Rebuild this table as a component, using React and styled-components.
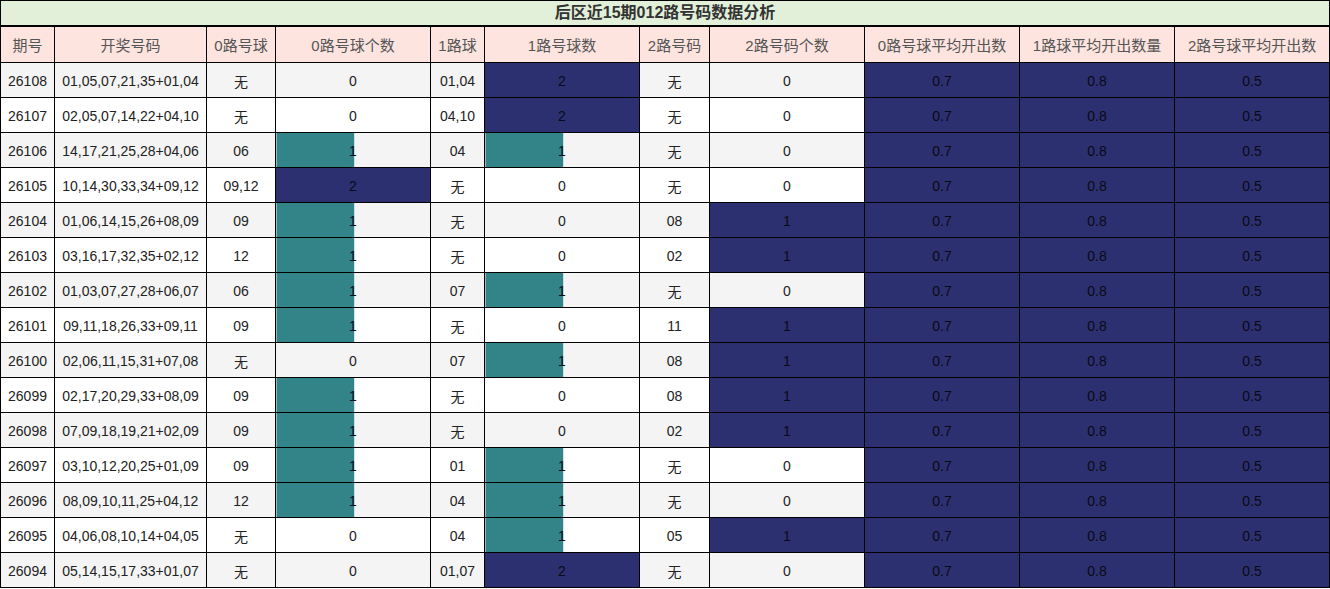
import React from "react";
import styled, { createGlobalStyle } from "styled-components";

const GlobalStyle = createGlobalStyle`
  body {
    margin: 0;
    background: #ffffff;
    font-family: "Liberation Sans", "Noto Sans CJK SC", sans-serif;
  }
`;

const Table = styled.table`
  border-collapse: collapse;
  table-layout: fixed;
  width: 1330px;
  font-size: 14px;
  color: #222222;
`;

const TitleCell = styled.th`
  height: 24px;
  padding: 0;
  background: #e2efd9;
  border: 1px solid #000;
  border-bottom: 2px solid #000;
  font-size: 16px;
  font-weight: bold;
  color: #333333;
  text-align: center;
  line-height: 24px;
`;

const HeadCell = styled.th`
  height: 35px;
  padding: 0;
  background: #fde4df;
  border: 1px solid #000;
  font-size: 15px;
  font-weight: normal;
  color: #555555;
  text-align: center;
  white-space: nowrap;
`;

const Row = styled.tr`
  background: ${(p) => (p.$odd ? "#f4f4f4" : "#ffffff")};
`;

const Cell = styled.td`
  height: 33px;
  padding: 1px 0 0;
  border: 1px solid #000;
  text-align: center;
  white-space: nowrap;
`;

const BarCell = styled(Cell)`
  color: ${(p) => (p.$full || p.$part ? "#0a0a14" : "#222222")};
  background-color: ${(p) => (p.$full ? "#2d3070" : "transparent")};
  background-image: ${(p) =>
    p.$part
      ? "linear-gradient(to right, #8fbcbe 0 1px, #338489 1px calc(100% - 1px), #a9cfd1 calc(100% - 1px))"
      : "none"};
  background-repeat: no-repeat;
  background-size: ${(p) => p.$part || 0}% 100%;
`;

const cols = [54, 152, 69, 155, 54, 155, 70, 155, 155, 155, 155];

const headers = [
  "期号",
  "开奖号码",
  "0路号球",
  "0路号球个数",
  "1路球",
  "1路号球数",
  "2路号码",
  "2路号码个数",
  "0路号球平均开出数",
  "1路球平均开出数量",
  "2路号球平均开出数",
];

const rows = [
  ["26108", "01,05,07,21,35+01,04", "无", 0, "01,04", 2, "无", 0],
  ["26107", "02,05,07,14,22+04,10", "无", 0, "04,10", 2, "无", 0],
  ["26106", "14,17,21,25,28+04,06", "06", 1, "04", 1, "无", 0],
  ["26105", "10,14,30,33,34+09,12", "09,12", 2, "无", 0, "无", 0],
  ["26104", "01,06,14,15,26+08,09", "09", 1, "无", 0, "08", 1],
  ["26103", "03,16,17,32,35+02,12", "12", 1, "无", 0, "02", 1],
  ["26102", "01,03,07,27,28+06,07", "06", 1, "07", 1, "无", 0],
  ["26101", "09,11,18,26,33+09,11", "09", 1, "无", 0, "11", 1],
  ["26100", "02,06,11,15,31+07,08", "无", 0, "07", 1, "08", 1],
  ["26099", "02,17,20,29,33+08,09", "09", 1, "无", 0, "08", 1],
  ["26098", "07,09,18,19,21+02,09", "09", 1, "无", 0, "02", 1],
  ["26097", "03,10,12,20,25+01,09", "09", 1, "01", 1, "无", 0],
  ["26096", "08,09,10,11,25+04,12", "12", 1, "04", 1, "无", 0],
  ["26095", "04,06,08,10,14+04,05", "无", 0, "04", 1, "05", 1],
  ["26094", "05,14,15,17,33+01,07", "无", 0, "01,07", 2, "无", 0],
];

const maxOf = (i) => Math.max(...rows.map((r) => r[i]));
const maxes = { 3: maxOf(3), 5: maxOf(5), 7: maxOf(7) };

function Bar({ value, max }) {
  if (value === 0) return <BarCell>{value}</BarCell>;
  if (value >= max) return <BarCell $full>{value}</BarCell>;
  return <BarCell $part={(value / max) * 100 + 1}>{value}</BarCell>;
}

export default function App() {
  return (
    <>
      <GlobalStyle />
      <Table>
        <colgroup>
          {cols.map((w, i) => (
            <col key={i} style={{ width: w }} />
          ))}
        </colgroup>
        <thead>
          <tr>
            <TitleCell colSpan={11}>后区近15期012路号码数据分析</TitleCell>
          </tr>
          <tr>
            {headers.map((h) => (
              <HeadCell key={h}>{h}</HeadCell>
            ))}
          </tr>
        </thead>
        <tbody>
          {rows.map((r, i) => (
            <Row key={r[0]} $odd={i % 2 === 0}>
              <Cell>{r[0]}</Cell>
              <Cell>{r[1]}</Cell>
              <Cell>{r[2]}</Cell>
              <Bar value={r[3]} max={maxes[3]} />
              <Cell>{r[4]}</Cell>
              <Bar value={r[5]} max={maxes[5]} />
              <Cell>{r[6]}</Cell>
              <Bar value={r[7]} max={maxes[7]} />
              <BarCell $full>0.7</BarCell>
              <BarCell $full>0.8</BarCell>
              <BarCell $full>0.5</BarCell>
            </Row>
          ))}
        </tbody>
      </Table>
    </>
  );
}
